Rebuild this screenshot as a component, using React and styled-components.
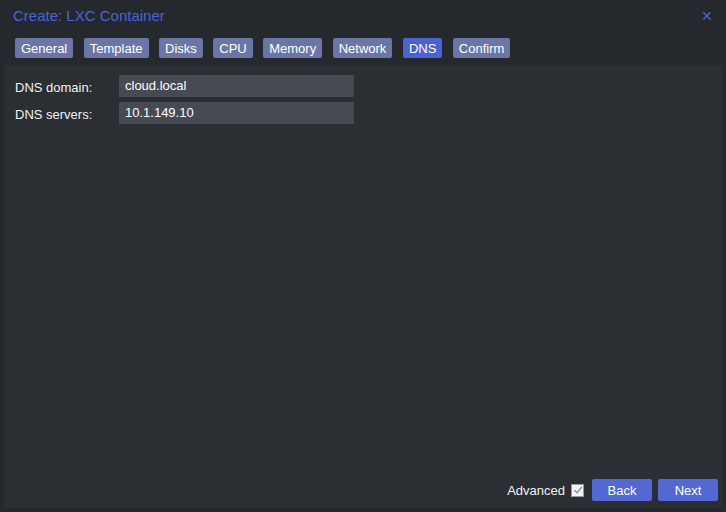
import React from 'react'
import styled, { createGlobalStyle } from 'styled-components'

const Global = createGlobalStyle`
    html, body {
        margin: 0;
        padding: 0;
        background: #25282d;
    }
    body {
        font-family: "Liberation Sans", Arial, sans-serif;
        font-size: 13px;
        color: #f2f2f2;
    }
`

const Window = styled.div`
    width: 726px;
    height: 512px;
    background: #25282d;
    display: flex;
    flex-direction: column;
    box-sizing: border-box;
`

const Header = styled.div`
    height: 31px;
    display: flex;
    align-items: center;
    justify-content: space-between;
    padding: 0 13px 0 13px;
`

const Title = styled.div`
    color: #4865d6;
    font-size: 15px;
`

const Close = styled.div`
    color: #4865d6;
    font-size: 14px;
    line-height: 1;
    margin-top: 1px;
`

const Tabs = styled.div`
    display: flex;
    gap: 10.5px;
    padding: 7px 15px 7px 15px;
`

const Tab = styled.div`
    height: 20px;
    line-height: 21px;
    padding: 0 6px;
    border-radius: 2px;
    background: ${p => p.$active ? '#4b62d2' : '#6b76a6'};
    color: #fff;
    font-size: 13px;
`

const Panel = styled.div`
    flex: 1;
    margin: 0 4px 4px 4px;
    background: #2b2e33;
    display: flex;
    flex-direction: column;
`

const Form = styled.div`
    flex: 1;
    padding: 10px 11px;
    display: flex;
    flex-direction: column;
    gap: 5px;
`

const Row = styled.div`
    display: flex;
    align-items: center;
`

const Label = styled.div`
    width: 104px;
    padding-top: 3px;
    font-size: 13px;
`

const Input = styled.div`
    width: 229px;
    height: 22px;
    line-height: 21px;
    padding-left: 6px;
    background: #474a52;
    color: #fff;
    font-size: 13px;
`

const Footer = styled.div`
    display: flex;
    justify-content: flex-end;
    align-items: center;
    padding: 0 4px 7px 0;
    gap: 6px;
`

const Advanced = styled.label`
    display: flex;
    align-items: center;
    gap: 6px;
    margin-right: 2px;
    font-size: 13px;
`

const Check = styled.span`
    width: 11px;
    height: 11px;
    background: #f4f4f4;
    border: 1px solid #9a9a9a;
    display: flex;
    align-items: center;
    justify-content: center;
`

const Button = styled.button`
    width: 60px;
    height: 22px;
    border: none;
    border-radius: 2px;
    background: #5468d4;
    color: #fff;
    font-family: inherit;
    font-size: 13px;
    padding: 0;
`

const tabs = ['General', 'Template', 'Disks', 'CPU', 'Memory', 'Network', 'DNS', 'Confirm']

export default function App() {
    return (
        <Window>
            <Global />
            <Header>
                <Title>Create: LXC Container</Title>
                <Close>✕</Close>
            </Header>
            <Tabs>
                {tabs.map(t => <Tab key={t} $active={t === 'DNS'}>{t}</Tab>)}
            </Tabs>
            <Panel>
                <Form>
                    <Row>
                        <Label>DNS domain:</Label>
                        <Input>cloud.local</Input>
                    </Row>
                    <Row>
                        <Label>DNS servers:</Label>
                        <Input>10.1.149.10</Input>
                    </Row>
                </Form>
                <Footer>
                    <Advanced>
                        Advanced
                        <Check>
                            <svg width="10" height="10" viewBox="0 0 10 10">
                                <path d="M1.5 5.2 L4 7.8 L8.8 2" fill="none" stroke="#8a8a8a" strokeWidth="1.3" />
                            </svg>
                        </Check>
                    </Advanced>
                    <Button>Back</Button>
                    <Button>Next</Button>
                </Footer>
            </Panel>
        </Window>
    )
}
